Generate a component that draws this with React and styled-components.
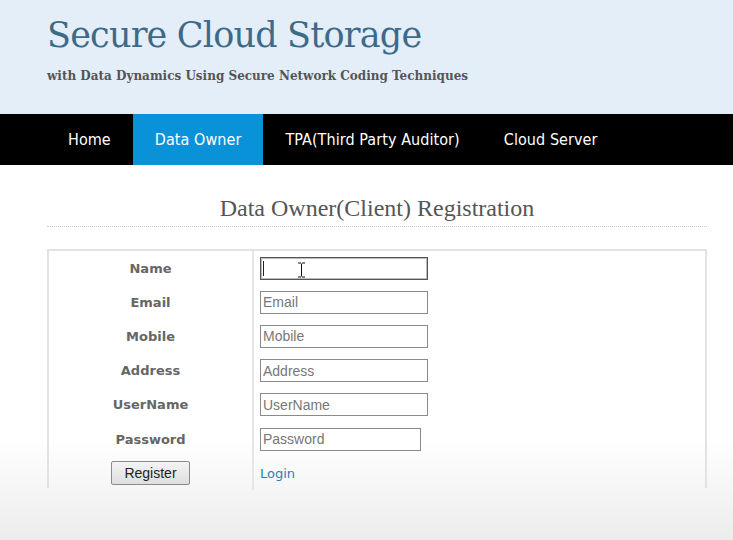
import React from 'react'
import styled, { createGlobalStyle } from 'styled-components'

const Global = createGlobalStyle`
  html, body { margin: 0; padding: 0; }
  body {
    width: 733px;
    height: 540px;
    overflow: hidden;
    background: linear-gradient(to bottom, #fff 0, #fff 440px, #ececec 540px);
  }
`

const Header = styled.header`
  height: 114px;
  background: #e4eef9;
  padding: 0 0 0 47px;
  box-sizing: border-box;
`

const Title = styled.h1`
  margin: 0;
  padding-top: 12px;
  font-family: "DejaVu Serif", Georgia, serif;
  font-weight: normal;
  font-size: 35px;
  line-height: 46px;
  color: #3d6a88;
  letter-spacing: -0.8px;
`

const Subtitle = styled.div`
  margin-top: 11px;
  font-family: "DejaVu Serif", Georgia, serif;
  font-weight: bold;
  font-size: 12px;
  color: #555;
`

const Nav = styled.nav`
  height: 51px;
  background: #000;
  display: flex;
  padding-left: 46px;
`

const NavItem = styled.a`
  display: flex;
  align-items: center;
  padding: 0 22px;
  font-family: "DejaVu Sans Condensed", "DejaVu Sans", sans-serif;
  font-size: 16px;
  letter-spacing: 0.07px;
  color: #fff;
  background: ${(p) => (p.active ? '#0a92d9' : 'transparent')};
`

const Main = styled.main`
  padding: 0 26px 0 47px;
`

const Heading = styled.h2`
  margin: 0;
  padding: 30px 0 5px;
  line-height: 26px;
  text-align: center;
  font-family: "Liberation Serif", "Times New Roman", serif;
  font-weight: normal;
  font-size: 24px;
  color: #555;
  border-bottom: 1px dotted #ccc;
`

const Box = styled.div`
  margin-top: 22px;
  border: 2px solid #e2e2e2;
  border-bottom: none;
  display: grid;
  grid-template-columns: 203px 1fr;
  height: 237px;
`

const Col = styled.div`
  display: flex;
  flex-direction: column;
  border-left: ${(p) => (p.divided ? '2px solid #e6e6e6' : 'none')};
  padding-left: ${(p) => (p.divided ? '6px' : '0')};
`

const Cell = styled.div`
  height: 34.2px;
  flex-shrink: 0;
  display: flex;
  align-items: center;
  justify-content: ${(p) => (p.center ? 'center' : 'flex-start')};
`

const Label = styled.span`
  font-family: "DejaVu Sans", Verdana, sans-serif;
  font-weight: bold;
  font-size: 13px;
  color: #666;
`

const InputWrap = styled.div`
  position: relative;
`

const Input = styled.input`
  box-sizing: border-box;
  width: ${(p) => p.w || 168}px;
  height: 23px;
  padding: 0 2px;
  border: 1px solid ${(p) => (p.focused ? '#555' : '#8a8a8a')};
  box-shadow: ${(p) => (p.focused ? 'inset 0 0 0 1px #bbb' : 'none')};
  font-family: "Liberation Sans", Arial, sans-serif;
  font-size: 14px;
  color: #333;
  outline: none;
  &::placeholder { color: #777; }
`

const Caret = styled.span`
  position: absolute;
  left: 3px;
  top: 4px;
  width: 1px;
  height: 15px;
  background: #222;
`

const Cursor = styled.svg`
  position: absolute;
  left: 37px;
  top: 5px;
`

const Button = styled.button`
  width: 79px;
  height: 24px;
  border: 1px solid #8b8b8b;
  border-radius: 2px;
  background: linear-gradient(#f4f4f4, #dedede);
  font-family: "Liberation Sans", Arial, sans-serif;
  font-size: 14px;
  color: #222;
  padding: 0;
`

const Link = styled.a`
  font-family: "DejaVu Sans", Verdana, sans-serif;
  font-size: 13px;
  color: #2a7fb5;
`

const fields = [
  { label: 'Name', focused: true },
  { label: 'Email' },
  { label: 'Mobile' },
  { label: 'Address' },
  { label: 'UserName' },
  { label: 'Password', w: 161 },
]

export default function App() {
  return (
    <>
      <Global />
      <Header>
        <Title>Secure Cloud Storage</Title>
        <Subtitle>with Data Dynamics Using Secure Network Coding Techniques</Subtitle>
      </Header>
      <Nav>
        <NavItem>Home</NavItem>
        <NavItem active>Data Owner</NavItem>
        <NavItem>TPA(Third Party Auditor)</NavItem>
        <NavItem>Cloud Server</NavItem>
      </Nav>
      <Main>
        <Heading>Data Owner(Client) Registration</Heading>
        <Box>
          <Col>
            {fields.map((f) => (
              <Cell center key={f.label}>
                <Label>{f.label}</Label>
              </Cell>
            ))}
            <Cell center>
              <Button>Register</Button>
            </Cell>
          </Col>
          <Col divided>
            {fields.map((f) => (
              <Cell key={f.label}>
                <InputWrap>
                  <Input
                    w={f.w}
                    focused={f.focused}
                    placeholder={f.focused ? '' : f.label}
                  />
                  {f.focused && (
                    <>
                      <Caret />
                      <Cursor width="9" height="16" viewBox="0 0 9 16">
                        <path d="M1 1h3M5 1h3M4.5 1.5v13M1 15h3M5 15h3" stroke="#111" strokeWidth="1" fill="none" />
                      </Cursor>
                    </>
                  )}
                </InputWrap>
              </Cell>
            ))}
            <Cell>
              <Link>Login</Link>
            </Cell>
          </Col>
        </Box>
      </Main>
    </>
  )
}
